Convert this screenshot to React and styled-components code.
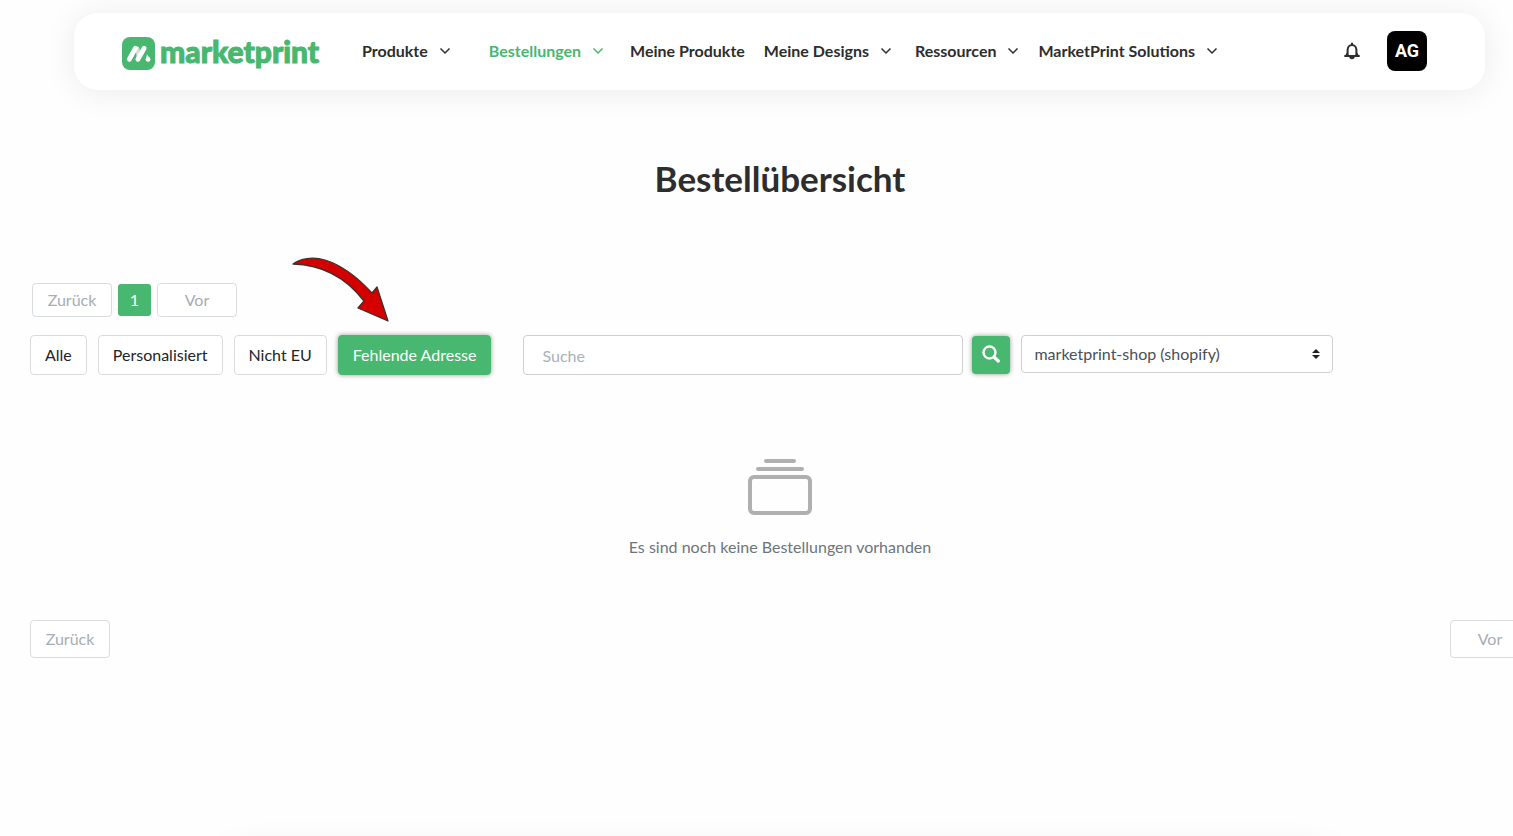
import React from 'react';
import styled, { createGlobalStyle } from 'styled-components';

const green = '#48b770';

const GlobalStyle = createGlobalStyle`
  *, *::before, *::after { box-sizing: border-box; }
  body {
    margin: 0;
    background: #fefefe;
    color: #2d2d2d;
    font-family: Lato, "Liberation Sans", sans-serif;
    font-size: 16px;
    line-height: 24px;
  }
  button, input, select { font: inherit; color: inherit; margin: 0; }
  svg { display: block; flex-shrink: 0; }
`;

const Viewport = styled.div`
  min-height: 100vh;
  overflow: hidden;
  display: flex;
`;

const Page = styled.div`
  flex: 0 0 auto;
  width: calc(100% + 47px);
  height: 100vh;
`;

const Header = styled.header`
  display: flex;
  align-items: center;
  height: 77px;
  margin: 13px 75px 0 74px;
  padding: 0 58px 2px 48px;
  border-radius: 24px;
  background: #fff;
  box-shadow: 0 2px 32px rgba(0, 0, 0, 0.08);
`;

const Brand = styled.a`
  display: flex;
  align-items: center;
  gap: 5px;
  width: 240px;
  margin-top: 6px;
  color: ${green};
  text-decoration: none;
`;

const Wordmark = styled.span`
  font-family: Lato, sans-serif;
  font-size: 30px;
  font-weight: 900;
  line-height: 32px;
  margin-top: -6px;
  -webkit-text-stroke: 1px ${green};
`;

const Nav = styled.nav`
  display: flex;
  align-items: center;
  flex: 1;
`;

const NavItem = styled.a`
  display: flex;
  align-items: center;
  gap: 11px;
  margin-right: ${(p) => p.$gap}px;
  color: ${(p) => (p.$active ? green : '#2d2d2d')};
  font-weight: 700;
  text-decoration: none;
  white-space: nowrap;
`;

const BellButton = styled.button`
  display: flex;
  padding: 4px;
  margin-right: 22px;
  border: 0;
  background: none;
`;

const Avatar = styled.button`
  width: 40px;
  height: 40px;
  padding: 0;
  border: 0;
  border-radius: 8px;
  background: #000;
  color: #fff;
  font-family: Roboto, sans-serif;
  font-size: 18px;
  font-weight: 700;
`;

const Title = styled.h1`
  margin: 63px 0 80px;
  font-size: 35px;
  font-weight: 700;
  line-height: 50px;
  text-align: center;
`;

const Main = styled.main`
  padding: 0 30px;
`;

const Pager = styled.div`
  display: flex;
  align-items: center;
  gap: 6px;
  padding-left: 2px;
  margin-bottom: 18px;
`;

const PageStep = styled.button`
  width: 80px;
  height: ${(p) => (p.$large ? 38 : 34)}px;
  padding: 0;
  border: 1px solid #d9dcdf;
  border-radius: 4px;
  background: #fff;
  color: #a6adb4;
`;

const PageNumber = styled.button`
  width: 33px;
  height: 32px;
  padding: 0;
  border: 0;
  border-radius: 3px;
  background: ${green};
  color: #fff;
`;

const Toolbar = styled.div`
  display: flex;
  align-items: flex-start;
  gap: 11px;
`;

const FilterSlot = styled.div`
  position: relative;
`;

const FilterButton = styled.button`
  height: 40px;
  padding: 0 14px;
  border: 1px solid ${(p) => (p.$active ? green : '#d9dcdf')};
  border-radius: 4px;
  background: ${(p) => (p.$active ? green : '#fff')};
  color: ${(p) => (p.$active ? '#fff' : '#212529')};
  box-shadow: ${(p) => (p.$active ? '0 0 5px rgba(0, 0, 0, 0.4)' : 'none')};
  white-space: nowrap;
`;

const Pointer = styled.svg`
  position: absolute;
  left: -48px;
  top: -80px;
  pointer-events: none;
`;

const SearchForm = styled.form`
  display: flex;
  align-items: center;
  gap: 9px;
  flex: 0 1 487px;
  margin-left: 21px;
`;

const SearchInput = styled.input`
  flex: 1;
  min-width: 0;
  height: 40px;
  padding: 0 18px;
  border: 1px solid #ced0d2;
  border-radius: 4px;
  background: #fff;
  &::placeholder { color: #a9b1b9; opacity: 1; }
`;

const SearchButton = styled.button`
  display: flex;
  align-items: center;
  justify-content: center;
  width: 38px;
  height: 38px;
  padding: 0 0 2px;
  border: 0;
  border-radius: 4px;
  background: ${green};
  color: #fff;
  box-shadow: 0 0 5px rgba(0, 0, 0, 0.4);
`;

const SelectBox = styled.div`
  position: relative;
  flex: 0 1 312px;
`;

const ShopSelect = styled.select`
  appearance: none;
  width: 100%;
  height: 38px;
  padding: 0 32px 0 12px;
  border: 1px solid #ced0d2;
  border-radius: 4px;
  background: #fff;
  color: #495057;
`;

const SelectArrows = styled.svg`
  position: absolute;
  right: 13px;
  top: 14px;
  pointer-events: none;
`;

const Empty = styled.section`
  display: flex;
  flex-direction: column;
  align-items: center;
  gap: 20px;
  padding: 84px 0 61px;
  color: #6c757d;
`;

const EmptyText = styled.p`
  margin: 0;
`;

const BottomPager = styled.div`
  display: flex;
  justify-content: space-between;
`;

const Footer = styled.footer`
  height: 120px;
  margin: 188px 224px 0;
  border-radius: 24px;
  background: #fff;
  box-shadow: 0 2px 32px rgba(0, 0, 0, 0.08);
`;

function Chevron() {
  return (
    <svg width="12" height="12" viewBox="0 0 12 12" fill="none" stroke="currentColor" strokeWidth="1.500" aria-hidden="true">
      <path d="M1.500 3.500 6 8l4.500-4.500" />
    </svg>
  );
}

function LogoMark() {
  return (
    <svg width="33" height="33" viewBox="0 0 33 33" aria-hidden="true">
      <rect width="33" height="33" rx="8" fill={green} />
      <g fill="none" stroke="#fff" strokeWidth="4.800" strokeLinecap="round">
        <path d="M15.500 11.500 16.500 19" stroke="#d3dcd6" strokeWidth="4" />
        <path d="M7.300 22.300 13.500 11.300" />
        <path d="M15.900 22.300 22.200 11.300" />
      </g>
      <path d="m25 17.500 3.200 4.300-4.500 1Z" fill="#fff" />
      <circle cx="26" cy="22.400" r="2.400" fill="#fff" />
    </svg>
  );
}

function Bell() {
  return (
    <svg width="18" height="18" viewBox="0 0 18 18" aria-hidden="true">
      <path d="M4.600 13.200V8a4.400 5 0 0 1 8.800 0v5.200" fill="none" stroke="#2d2d2d" strokeWidth="2" />
      <path d="M9 .8v2.500M1.300 14h15.400" stroke="#2d2d2d" strokeWidth="2" />
      <path d="M4.300 10 1.800 14h4ZM13.700 10l2.500 4h-4ZM6.300 14.500h5.400a2.700 2.700 0 0 1-5.400 0Z" fill="#2d2d2d" />
    </svg>
  );
}

const navItems = [
  { label: 'Produkte', menu: true, gap: 38 },
  { label: 'Bestellungen', menu: true, gap: 26, active: true },
  { label: 'Meine Produkte', gap: 19 },
  { label: 'Meine Designs', menu: true, gap: 23 },
  { label: 'Ressourcen', menu: true, gap: 19 },
  { label: 'MarketPrint Solutions', menu: true, gap: 0 },
];

export default function App() {
  return (
    <Viewport>
      <GlobalStyle />
      <Page>
        <Header>
          <Brand href="#">
            <LogoMark />
            <Wordmark>marketprint</Wordmark>
          </Brand>
          <Nav>
            {navItems.map((item) => (
              <NavItem key={item.label} href="#" $gap={item.gap} $active={item.active}>
                {item.label}
                {item.menu && <Chevron />}
              </NavItem>
            ))}
          </Nav>
          <BellButton type="button" aria-label="Benachrichtigungen"><Bell /></BellButton>
          <Avatar type="button">AG</Avatar>
        </Header>

        <Main>
          <Title>Bestellübersicht</Title>
          <Pager>
            <PageStep type="button">Zurück</PageStep>
            <PageNumber type="button">1</PageNumber>
            <PageStep type="button">Vor</PageStep>
          </Pager>

          <Toolbar>
            <FilterButton type="button">Alle</FilterButton>
            <FilterButton type="button">Personalisiert</FilterButton>
            <FilterButton type="button">Nicht EU</FilterButton>
            <FilterSlot>
              <FilterButton type="button" $active>Fehlende Adresse</FilterButton>
              <Pointer width="100" height="68" viewBox="0 0 100 68" aria-hidden="true">
                <path
                  d="M3 9C10 4 22 1 35 5c20 6 36 21 47 33l5-6 11 34-30-13 6-7C64 33 42 10 3 9Z"
                  fill="#d40000"
                  stroke="#40302c"
                  strokeWidth="1.300"
                  strokeLinejoin="round"
                />
              </Pointer>
            </FilterSlot>
            <SearchForm role="search" onSubmit={(e) => e.preventDefault()}>
              <SearchInput type="text" placeholder="Suche" aria-label="Suche" />
              <SearchButton type="submit" aria-label="Suchen">
                <svg width="18" height="18" viewBox="0 0 18 18" fill="none" stroke="currentColor" aria-hidden="true">
                  <circle cx="7.500" cy="7.500" r="6" strokeWidth="2.400" />
                  <path d="m12 12 4.300 4" strokeWidth="3.200" strokeLinecap="round" />
                </svg>
              </SearchButton>
            </SearchForm>
            <SelectBox>
              <ShopSelect aria-label="Shop" defaultValue="shopify">
                <option value="shopify">marketprint-shop (shopify)</option>
              </ShopSelect>
              <SelectArrows width="8" height="10" viewBox="0 0 8 10" fill="#212529" aria-hidden="true">
                <path d="M0 4h8L4 0ZM0 6h8l-4 4Z" />
              </SelectArrows>
            </SelectBox>
          </Toolbar>

          <Empty>
            <svg width="64" height="56" viewBox="0 0 64 56" fill="none" stroke="#b0b0b0" strokeWidth="4" strokeLinecap="round" aria-hidden="true">
              <path d="M18 2h28M10 10h44" />
              <rect x="2" y="18" width="60" height="36" rx="4" />
            </svg>
            <EmptyText>Es sind noch keine Bestellungen vorhanden</EmptyText>
          </Empty>

          <BottomPager>
            <PageStep type="button" $large>Zurück</PageStep>
            <PageStep type="button" $large>Vor</PageStep>
          </BottomPager>
        </Main>
        <Footer />
      </Page>
    </Viewport>
  );
}
